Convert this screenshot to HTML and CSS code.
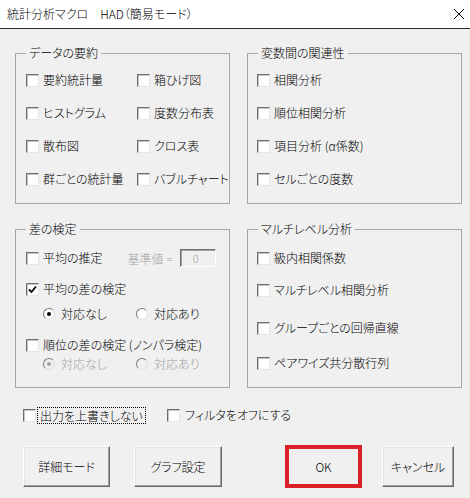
FILE: index.html
```html
<!DOCTYPE html>
<html lang="ja">
<head>
<meta charset="utf-8">
<title>HAD</title>
<link rel="stylesheet" href="styles.css">
</head>
<body>
<div class="window">
  <div class="titlebar">
    <span class="title">統計分析マクロ　HAD（簡易モード）</span>
    <svg class="close" width="12" height="12" viewBox="0 0 12 12"><path d="M1 1L11 11M11 1L1 11" stroke="#000" stroke-width="1" fill="none"/></svg>
  </div>
  <div class="content">
    <div class="groups">
      <fieldset class="group">
        <legend>データの要約</legend>
        <div class="body body-summary">
          <label class="cb"><span class="box"></span>要約統計量</label>
          <label class="cb"><span class="box"></span>箱ひげ図</label>
          <label class="cb"><span class="box"></span>ヒストグラム</label>
          <label class="cb"><span class="box"></span>度数分布表</label>
          <label class="cb"><span class="box"></span>散布図</label>
          <label class="cb"><span class="box"></span>クロス表</label>
          <label class="cb"><span class="box"></span>群ごとの統計量</label>
          <label class="cb"><span class="box"></span>バブルチャート</label>
        </div>
      </fieldset>
      <fieldset class="group">
        <legend>変数間の関連性</legend>
        <div class="body body-assoc">
          <label class="cb"><span class="box"></span>相関分析</label>
          <label class="cb"><span class="box"></span>順位相関分析</label>
          <label class="cb"><span class="box"></span>項目分析 (α係数)</label>
          <label class="cb"><span class="box"></span>セルごとの度数</label>
        </div>
      </fieldset>
      <fieldset class="group">
        <legend>差の検定</legend>
        <div class="body body-diff">
          <div class="row r1">
            <label class="cb"><span class="box"></span>平均の推定</label>
            <span class="kijun">基準値 =</span>
            <span class="numbox">0</span>
          </div>
          <div class="row r2">
            <label class="cb"><span class="box checked"><svg width="9" height="9" viewBox="0 0 9 9"><path d="M1 4.5L3.5 7L8 1.5" stroke="#000" stroke-width="1.8" fill="none"/></svg></span>平均の差の検定</label>
          </div>
          <div class="row r3 radios">
            <label class="rb"><span class="radio on"></span>対応なし</label>
            <label class="rb"><span class="radio"></span>対応あり</label>
          </div>
          <div class="row r4">
            <label class="cb"><span class="box"></span>順位の差の検定 (ノンパラ検定)</label>
          </div>
          <div class="row r5 radios disabled">
            <label class="rb"><span class="radio on"></span>対応なし</label>
            <label class="rb"><span class="radio"></span>対応あり</label>
          </div>
        </div>
      </fieldset>
      <fieldset class="group">
        <legend>マルチレベル分析</legend>
        <div class="body body-multi">
          <div class="row m1"><label class="cb"><span class="box"></span>級内相関係数</label></div>
          <div class="row m2"><label class="cb"><span class="box"></span>マルチレベル相関分析</label></div>
          <div class="row m3"><label class="cb"><span class="box"></span>グループごとの回帰直線</label></div>
          <div class="row m4"><label class="cb"><span class="box"></span>ペアワイズ共分散行列</label></div>
        </div>
      </fieldset>
    </div>
    <div class="options">
      <label class="cb opt1"><span class="box"></span><span class="focus">出力を上書きしない</span></label>
      <label class="cb opt2"><span class="box"></span>フィルタをオフにする</label>
    </div>
    <div class="buttons">
      <button class="btn b-detail">詳細モード</button>
      <button class="btn b-graph">グラフ設定</button>
      <button class="btn b-ok">OK</button>
      <button class="btn b-cancel">キャンセル</button>
    </div>
  </div>
</div>
</body>
</html>
```
FILE: styles.css
```css
* { box-sizing: border-box; }
html, body { margin: 0; padding: 0; }
body {
  width: 470px;
  height: 498px;
  background: #f0f0f0;
  font-family: "Noto Sans CJK JP", "Noto Sans", sans-serif;
  font-size: 12px;
  font-weight: 300;
  color: #000;
  font-feature-settings: "palt";
  overflow: hidden;
}
.window { width: 470px; height: 498px; }
.titlebar {
  height: 29px;
  background: #ffffff;
  border-bottom: 1px solid #2b2b2b;
  display: flex;
  align-items: center;
  justify-content: space-between;
  padding: 0 5px 1px 7px;
}
.title { font-size: 12px; line-height: 16px; }
.close { margin-right: 0; }
.content { padding: 16px 8px 0 15px; }
.groups {
  display: grid;
  grid-template-columns: 215px 215px;
  column-gap: 17px;
  row-gap: 17px;
}
.group {
  margin: 0;
  padding: 0;
  border: 1px solid #a7a7a7;
  min-width: 0;
}
.group legend {
  margin-left: 10px;
  padding: 0 3px;
  line-height: 16px;
  height: 16px;
}
.body-summary {
  display: grid;
  grid-template-columns: 111px auto;
  row-gap: 13px;
  padding: 9px 0 14px 10px;
}
.body-assoc {
  display: grid;
  row-gap: 13px;
  padding: 9px 0 14px 9px;
}
.cb, .rb {
  display: flex;
  align-items: center;
  gap: 4px;
  height: 20px;
  line-height: 16px;
  white-space: nowrap;
}
.box {
  width: 13px;
  height: 13px;
  flex: none;
  background: #fff;
  border: 1px solid;
  border-color: #6e6e6e #e6e6e6 #e6e6e6 #6e6e6e;
  box-shadow: inset 1px 1px 0 #c4c4c4;
  display: flex;
  align-items: center;
  justify-content: center;
}
.box svg { display: block; }
.body-diff { padding: 0 0 14px 10px; }
.body-multi { padding: 0 0 15px 9px; }
.row { display: flex; align-items: center; height: 18px; }
.row .cb, .row .rb { height: 18px; }
.r1 { margin-top: 12px; }
.r2 { margin-top: 13px; }
.r3 { margin-top: 7px; }
.r4 { margin-top: 13px; }
.r5 { margin-top: 1px; }
.m1 { margin-top: 12px; }
.m2 { margin-top: 14px; }
.m3 { margin-top: 20px; }
.m4 { margin-top: 17px; }
.kijun { margin-left: 25px; color: #a0a0a0; }
.numbox {
  margin-left: 7px;
  width: 36px;
  height: 18px;
  border: 1px solid;
  border-color: #6e6e6e #fff #fff #6e6e6e;
  box-shadow: inset 1px 1px 0 #a0a0a0;
  color: #a0a0a0;
  font-size: 11px;
  line-height: 16px;
  padding-left: 12px;
  background: #f0f0f0;
}
.radios { padding-left: 17px; }
.radios .rb:first-child { width: 93px; }
.radio {
  width: 12px;
  height: 12px;
  flex: none;
  border-radius: 50%;
  background: #fff;
  border: 1px solid;
  border-color: #7a7a7a #e0e0e0 #e0e0e0 #7a7a7a;
  display: flex;
  align-items: center;
  justify-content: center;
  margin-right: 2px;
}
.radio.on::after {
  content: "";
  width: 4px;
  height: 4px;
  border-radius: 50%;
  background: #000;
}
.disabled { color: #a0a0a0; }
.disabled .radio { background: #f0f0f0; }
.disabled .radio.on::after { background: #a0a0a0; }
.options {
  display: flex;
  align-items: center;
  height: 18px;
  margin-top: 18px;
  padding-left: 8px;
}
.options .cb { height: 18px; }
.opt1 { gap: 1px; width: 144px; }
.focus {
  border: 1px dotted #000;
  padding: 0 2px;
  line-height: 15px;
}
.opt2 { gap: 5px; }
.buttons {
  display: flex;
  margin-top: 21px;
  padding-left: 8px;
  align-items: center;
}
.btn {
  font-family: inherit;
  font-size: 12px;
  font-weight: 300;
  font-feature-settings: "palt";
  height: 41px;
  background: #f0f0f0;
  border: 1px solid;
  border-color: #ffffff #696969 #696969 #ffffff;
  box-shadow: inset -1px -1px 0 #a0a0a0, inset 1px 1px 0 #e3e3e3;
  padding: 0;
  color: #000;
}
.b-detail { width: 87px; }
.b-graph { width: 88px; margin-left: 24px; }
.b-ok {
  width: 77px;
  height: 43px;
  margin-left: 63px;
  border: 4px solid #dc2027;
  box-shadow: none;
}
.b-cancel { width: 72px; margin-left: 20px; }
```
